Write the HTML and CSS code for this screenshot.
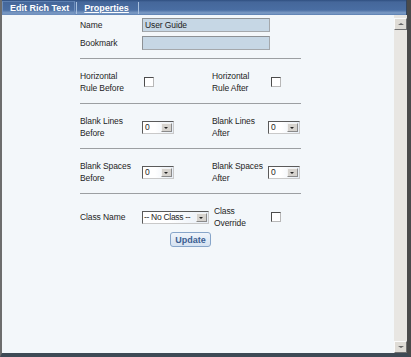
FILE: index.html
```html
<!DOCTYPE html>
<html lang="en">
<head>
    <meta charset="UTF-8">
    <title>Edit Rich Text - Properties</title>
    <link rel="stylesheet" href="styles.css">
</head>
<body>

    <div class="frame">
        <div class="tabbar">
            <span class="tab">Edit Rich Text</span>
            <span class="sep"></span>
            <span class="tab active">Properties</span>
            <span class="sep"></span>
        </div>

        <div class="main">
            <div class="content">
                <div class="form">
                    <div class="row single">
                        <span class="label">Name</span>
                        <input class="text" type="text" value="User Guide">
                    </div>
                    <div class="row single">
                        <span class="label">Bookmark</span>
                        <input class="text" type="text" value="">
                    </div>

                    <div class="rule"></div>

                    <div class="row">
                        <span class="label">Horizontal<br>Rule Before</span>
                        <span class="check"></span>
                        <span class="label">Horizontal<br>Rule After</span>
                        <span class="check right"></span>
                    </div>

                    <div class="rule"></div>

                    <div class="row">
                        <span class="label">Blank Lines<br>Before</span>
                        <div class="select"><span class="value">0</span><span class="arrow"></span></div>
                        <span class="label">Blank Lines<br>After</span>
                        <div class="select"><span class="value">0</span><span class="arrow"></span></div>
                    </div>

                    <div class="rule"></div>

                    <div class="row">
                        <span class="label">Blank Spaces<br>Before</span>
                        <div class="select"><span class="value">0</span><span class="arrow"></span></div>
                        <span class="label">Blank Spaces<br>After</span>
                        <div class="select"><span class="value">0</span><span class="arrow"></span></div>
                    </div>

                    <div class="rule"></div>

                    <div class="row">
                        <span class="label">Class Name</span>
                        <div class="select wide"><span class="value">-- No Class --</span><span class="arrow"></span></div>
                        <span class="label shift">Class<br>Override</span>
                        <span class="check right"></span>
                    </div>

                    <div class="actions">
                        <button class="update">Update</button>
                    </div>
                </div>
            </div>

            <div class="scrollbar">
                <span class="btn up"></span>
                <span class="track"></span>
                <span class="btn down"></span>
            </div>
        </div>
    </div>

</body>
</html>
```

FILE: styles.css
```css
html, body {
    margin: 0;
    padding: 0;
}

body {
    width: 411px;
    height: 357px;
    font-family: "Liberation Sans", Arial, sans-serif;
    font-size: 8.5px;
    letter-spacing: -0.1px;
    color: #1e1e1e;
    background: #d4d0c8;
}

.frame {
    box-sizing: border-box;
    width: 411px;
    height: 357px;
    display: flex;
    flex-direction: column;
    border-left: 2px solid #6d6d6d;
    border-right: 4px solid #4a4a4a;
    border-bottom: 4px solid #3e4a55;
    background: #f3f7fa;
}

.tabbar {
    height: 15px;
    display: flex;
    align-items: center;
    background: linear-gradient(#2f4f80 0, #45679a 2px, #4a6ea3 10px, #7e9dc6 13px, #5b7fb1 15px);
    border-right: 1px solid #33455e;
}

.tab {
    color: #fff;
    font-weight: bold;
    font-size: 9px;
    letter-spacing: 0;
    padding: 0 5px 0 7px;
    line-height: 12px;
    border: 1px solid #6f8fbd;
    border-top-color: #5d7fb0;
}

.tab.active {
    text-decoration: underline;
    border-color: transparent;
    padding: 0 7px 0 6px;
}

.sep {
    width: 1px;
    height: 12px;
    background: #a9c0de;
    margin: 0 0 0 1px;
}

.main {
    flex: 1;
    display: flex;
}

.content {
    flex: 1;
    padding: 3px 0 0 78px;
}

.form {
    width: 221px;
    display: flex;
    flex-direction: column;
}

.row {
    display: grid;
    grid-template-columns: 62px 70px 56px auto;
    align-items: center;
    height: 24px;
    line-height: 12px;
}

.row.single {
    height: 14px;
    margin-bottom: 4px;
}

.label.shift {
    padding-left: 2px;
}

.text {
    box-sizing: border-box;
    width: 128px;
    height: 14px;
    margin: 0;
    padding: 0 2px;
    font-family: inherit;
    font-size: 8.5px;
    letter-spacing: -0.1px;
    color: #222;
    background: #c6d7e5;
    border: 1px solid #a4a8ac;
    border-top-color: #8d9195;
    border-left-color: #8d9195;
    outline: none;
}

.rule {
    height: 1px;
    background: #9c9fa2;
    margin: 8px 0 11px;
}

.row + .rule {
    margin-top: 9px;
}

.row.single + .rule {
    margin-top: 4px;
}

.check {
    width: 10px;
    height: 10px;
    box-sizing: border-box;
    margin-left: 2px;
    background: #fff;
    border: 1px solid #b8b8b8;
    border-top-color: #4c4c4c;
    border-left-color: #4c4c4c;
}

.check.right {
    margin-left: 3px;
}

.select {
    box-sizing: border-box;
    width: 32px;
    height: 13px;
    display: flex;
    align-items: stretch;
    border: 1px solid #c9c9c9;
    border-top-color: #5a5a5a;
    border-left-color: #5a5a5a;
    background: linear-gradient(90deg, #fff 40%, #e7eef6);
}

.select.wide {
    width: 67px;
}

.select .value {
    flex: 1;
    padding-left: 2px;
    line-height: 11px;
    white-space: nowrap;
    overflow: hidden;
}

.select.wide .value {
    padding-left: 1px;
    letter-spacing: -0.3px;
}

.select .arrow {
    flex: none;
    width: 9px;
    margin: 1px 1px 1px 0;
    background: #d6d3ce;
    border: 1px solid #8a8a8a;
    border-top-color: #f4f4f4;
    border-left-color: #f4f4f4;
    position: relative;
}

.select .arrow::after {
    content: "";
    position: absolute;
    left: 2px;
    top: 3px;
    border-left: 2px solid transparent;
    border-right: 2px solid transparent;
    border-top: 2px solid #222;
}

.actions {
    display: flex;
    justify-content: center;
    margin-top: 3px;
}

.update {
    box-sizing: border-box;
    width: 41px;
    height: 15px;
    padding: 0;
    font-family: inherit;
    font-size: 9px;
    font-weight: bold;
    color: #3c5f92;
    background: linear-gradient(#f0f5fb, #d5e2f1);
    border: 1px solid #87a5c9;
    border-radius: 3px;
}

.scrollbar {
    width: 13px;
    display: flex;
    flex-direction: column;
    background: #e8e6e2;
    padding: 3px 0 0;
}

.track {
    flex: 1;
}

.btn {
    box-sizing: border-box;
    width: 13px;
    height: 12px;
    background: #dfdcd6;
    border: 1px solid #717171;
    border-top-color: #fafafa;
    border-left-color: #fafafa;
    position: relative;
}

.btn::after {
    content: "";
    position: absolute;
    left: 3px;
    top: 4px;
    border-left: 3px solid transparent;
    border-right: 3px solid transparent;
}

.btn.up::after {
    border-bottom: 2px solid #666;
}

.btn.down::after {
    border-top: 2px solid #666;
}
```
